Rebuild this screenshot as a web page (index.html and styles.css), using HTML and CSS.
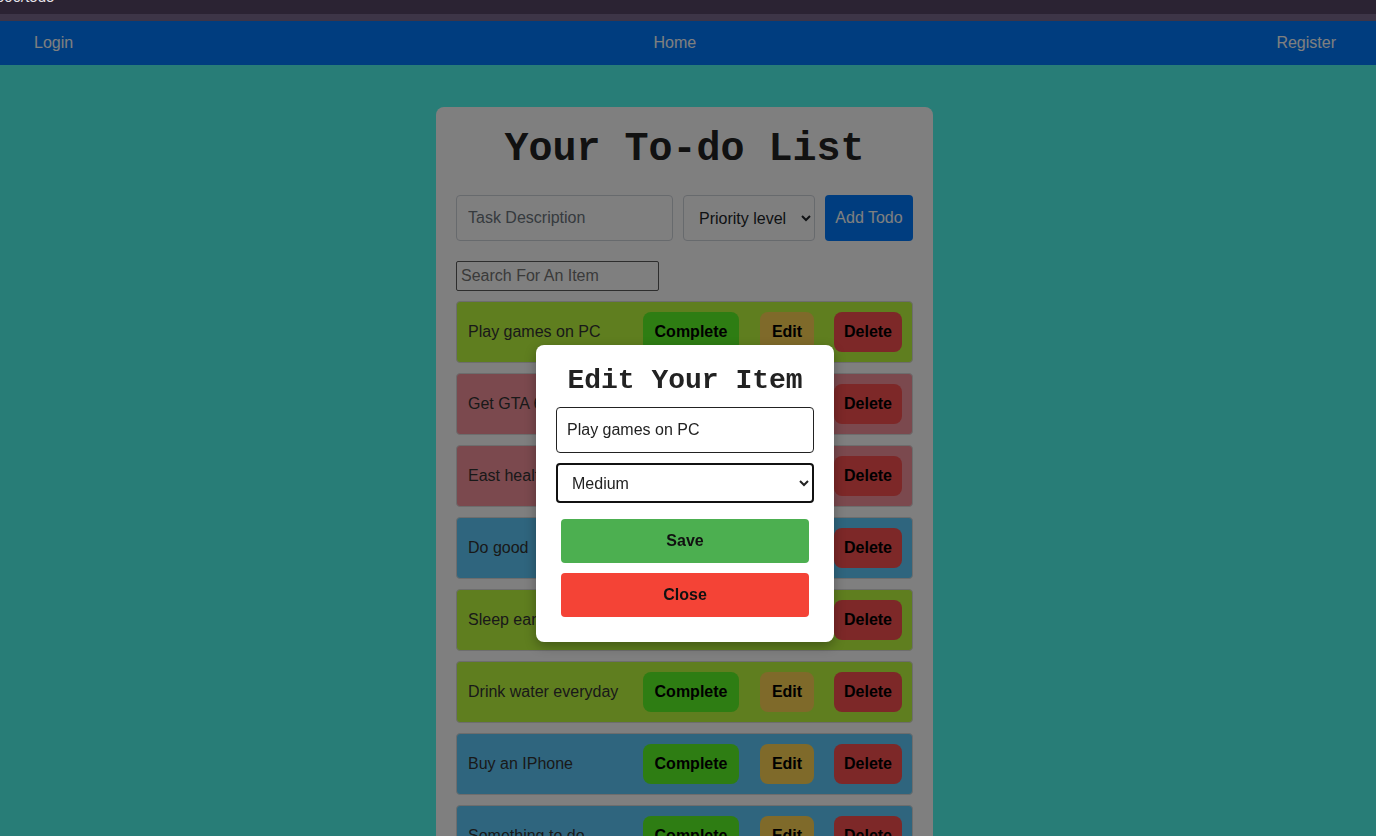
FILE: index.html
```html
<!DOCTYPE html>
<html lang="en">
<head>
<meta charset="utf-8">
<title>Todo</title>
<link rel="stylesheet" href="styles.css">
</head>
<body>
<div class="chrome"><span class="url">000/todo</span></div>
<nav class="nav">
  <a href="#" class="nav-link">Login</a>
  <a href="#" class="nav-link">Home</a>
  <a href="#" class="nav-link">Register</a>
</nav>
<main class="main">
  <section class="card">
    <h1 class="title">Your To-do List</h1>
    <form class="add-row">
      <input class="field task" type="text" placeholder="Task Description">
      <select class="field priority">
        <option>Priority level</option>
        <option>High</option>
        <option>Medium</option>
        <option>Low</option>
      </select>
      <button type="button" class="btn-add">Add Todo</button>
    </form>
    <input class="search" type="text" placeholder="Search For An Item">
    <ul class="list">
      <li class="item green"><span class="item-text">Play games on PC</span><div class="actions"><button class="act complete">Complete</button><button class="act edit">Edit</button><button class="act delete">Delete</button></div></li>
      <li class="item red"><span class="item-text">Get GTA 6</span><div class="actions"><button class="act complete">Complete</button><button class="act edit">Edit</button><button class="act delete">Delete</button></div></li>
      <li class="item red"><span class="item-text">East healthy</span><div class="actions"><button class="act complete">Complete</button><button class="act edit">Edit</button><button class="act delete">Delete</button></div></li>
      <li class="item blue"><span class="item-text">Do good</span><div class="actions"><button class="act complete">Complete</button><button class="act edit">Edit</button><button class="act delete">Delete</button></div></li>
      <li class="item green"><span class="item-text">Sleep early</span><div class="actions"><button class="act complete">Complete</button><button class="act edit">Edit</button><button class="act delete">Delete</button></div></li>
      <li class="item green"><span class="item-text">Drink water everyday</span><div class="actions"><button class="act complete">Complete</button><button class="act edit">Edit</button><button class="act delete">Delete</button></div></li>
      <li class="item blue"><span class="item-text">Buy an IPhone</span><div class="actions"><button class="act complete">Complete</button><button class="act edit">Edit</button><button class="act delete">Delete</button></div></li>
      <li class="item blue"><span class="item-text">Something to do</span><div class="actions"><button class="act complete">Complete</button><button class="act edit">Edit</button><button class="act delete">Delete</button></div></li>
    </ul>
  </section>
</main>
<div class="overlay"></div>
<div class="modal">
  <h2 class="modal-title">Edit Your Item</h2>
  <input class="edit-input" type="text" value="Play games on PC">
  <select class="edit-select">
    <option>High</option>
    <option selected>Medium</option>
    <option>Low</option>
  </select>
  <button class="modal-btn save">Save</button>
  <button class="modal-btn close">Close</button>
</div>
</body>
</html>
```
FILE: styles.css
```css
html {
  overflow: hidden;
}

body {
  margin: 0;
  background: #50faee;
  font-family: "Liberation Sans", Arial, sans-serif;
  color: #222;
}

.chrome {
  position: relative;
  z-index: 20;
  height: 21px;
  overflow: hidden;
  background: linear-gradient(#2b2333 0 14px, #3d3547 14px 21px);
}

.url {
  display: block;
  margin: -11px 0 0 -4px;
  font-size: 15px;
  line-height: 15px;
  color: #e6e3ea;
}

.nav {
  height: 44px;
  background: #007bff;
  display: flex;
  justify-content: space-between;
  align-items: center;
  padding: 0 40px 0 34px;
}

.nav-link {
  color: #ffffff;
  font-size: 16px;
  text-decoration: none;
}

.main {
  padding: 42px 7px 0 0;
}

.card {
  width: 457px;
  margin: 0 auto;
  padding: 20px;
  background: #ffffff;
  border-radius: 8px;
}

.title {
  margin: 0 0 23px;
  font-family: "Liberation Mono", "Courier New", monospace;
  font-size: 40px;
  line-height: 45px;
  font-weight: bold;
  text-align: center;
  color: #222;
}

.add-row {
  display: flex;
  gap: 10px;
  margin: 0;
}

.field {
  box-sizing: border-box;
  height: 46px;
  border: 1px solid #ced4da;
  border-radius: 4px;
  font-family: inherit;
  font-size: 16px;
  color: #212529;
  background: #fff;
}

.task {
  flex: 1;
  min-width: 0;
  padding: 0 11px;
}

.task::placeholder {
  color: #6c757d;
}

.priority {
  width: 132px;
  padding: 0 4px 0 11px;
}

.btn-add {
  width: 88px;
  height: 46px;
  border: 0;
  border-radius: 4px;
  background: #007bff;
  color: #fff;
  font-family: inherit;
  font-size: 16px;
  padding: 0;
}

.search {
  display: block;
  box-sizing: border-box;
  width: 203px;
  height: 30px;
  margin: 20px 0 10px;
  padding: 0 4px;
  border: 1px solid #5a5a5a;
  border-radius: 2px;
  font-family: inherit;
  font-size: 16px;
}

.search::placeholder {
  color: #757575;
}

.list {
  list-style: none;
  margin: 0;
  padding: 0;
  display: flex;
  flex-direction: column;
  gap: 10px;
}

.item {
  box-sizing: border-box;
  height: 62px;
  display: flex;
  align-items: center;
  padding: 0 10px 0 11px;
  border: 1px solid #dadada;
  border-radius: 4px;
}

.green { background: #bffc3e; }
.red { background: #f6929c; }
.blue { background: #5ecbfd; }

.item-text {
  flex: 1;
  font-size: 16px;
  color: #333;
}

.actions {
  display: flex;
  gap: 20px;
}

.act {
  height: 40px;
  padding: 0;
  border: 0;
  border-radius: 8px;
  font-family: inherit;
  font-size: 16px;
  font-weight: bold;
  color: #000;
}

.complete {
  width: 96px;
  margin-right: 1px;
  background: #5cfa26;
}

.edit {
  width: 54px;
  background: #fed454;
}

.delete {
  width: 68px;
  background: #fa5050;
}

.overlay {
  position: fixed;
  inset: 0;
  z-index: 10;
  background: rgba(0, 0, 0, 0.5);
}

.modal {
  position: fixed;
  top: 345px;
  left: calc(50% - 152px);
  z-index: 30;
  box-sizing: border-box;
  width: 298px;
  padding: 20px 20px 25px;
  background: #fff;
  border-radius: 8px;
  box-shadow: 0 4px 12px rgba(0, 0, 0, 0.3);
}

.modal-title {
  margin: 0 0 10px;
  font-family: "Liberation Mono", "Courier New", monospace;
  font-size: 28px;
  line-height: 32px;
  font-weight: bold;
  text-align: center;
  color: #222;
}

.edit-input {
  display: block;
  box-sizing: border-box;
  width: 100%;
  height: 46px;
  padding: 0 10px;
  border: 1px solid #222;
  border-radius: 4px;
  font-family: inherit;
  font-size: 16px;
  color: #222;
}

.edit-select {
  display: block;
  box-sizing: border-box;
  width: 100%;
  height: 40px;
  margin-top: 10px;
  padding: 0 2px 0 10px;
  border: 2px solid #111;
  border-radius: 4px;
  font-family: inherit;
  font-size: 16px;
  color: #222;
  background: #fff;
}

.modal-btn {
  display: block;
  width: 248px;
  height: 44px;
  margin: 10px auto 0;
  border: 0;
  border-radius: 4px;
  font-family: inherit;
  font-size: 16px;
  font-weight: bold;
  color: #111;
}

.save {
  margin-top: 16px;
  background: #4caf50;
}

.close {
  background: #f44336;
}
```
